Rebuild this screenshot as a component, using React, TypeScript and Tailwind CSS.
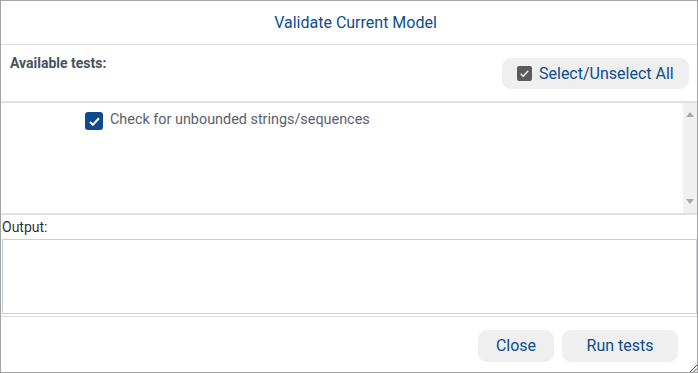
export default function App() {
  return (
    <div className="flex h-[373px] w-[698px] flex-col border border-[#a3a3a3] bg-white font-['Roboto',sans-serif]">
      {/* Header */}
      <div className="flex h-[44px] shrink-0 items-center justify-center border-b border-[#dcdcdc] pl-[13px]">
        <h1 className="text-[16px] text-[#0d4c92]">Validate Current Model</h1>
      </div>

      {/* Toolbar */}
      <div className="flex h-[58px] shrink-0 items-start justify-between border-b-2 border-[#e0e0e0] pr-[8px] pl-[9px]">
        <span className="mt-[8px] text-[14px] font-bold text-[#4a5260]">Available tests:</span>
        <button className="mt-[13px] flex h-[31px] w-[187px] items-center gap-[7px] rounded-[9px] bg-[#efefef] pl-[15px] text-[16px] text-[#0d4c92]">
          <span className="flex size-[15px] items-center justify-center rounded-[2px] bg-[#5b5b5b]">
            <svg viewBox="0 0 16 16" className="size-[11px]" fill="none" stroke="#f4f4f4" strokeWidth="2">
              <path d="M2.5 8.5l3.5 3.5 7.5-8" />
            </svg>
          </span>
          Select/Unselect All
        </button>
      </div>

      {/* Tests list */}
      <div className="flex h-[112px] shrink-0 border-b-2 border-[#e0e0e0]">
        <div className="flex flex-1 items-start pt-[8px] pl-[84px]">
          <label className="flex items-start gap-[7px] text-[14.4px] leading-[18px] text-[#5a616d]">
            <span className="mt-[1px] flex size-[18px] items-center justify-center rounded-[3px] bg-[#0e4a8f]">
              <svg viewBox="0 0 16 16" className="size-[13px]" fill="none" stroke="#fff" strokeWidth="2.4">
                <path d="M2.5 8.5l3.5 3.5 7.5-8" />
              </svg>
            </span>
            Check for unbounded strings/sequences
          </label>
        </div>
        <div className="flex w-[14px] flex-col items-center justify-between bg-[#f0f0f0] py-[9px]">
          <svg viewBox="0 0 8 5" className="h-[5px] w-[8px]">
            <path d="M4 0L8 5H0z" fill="#a8a8a8" />
          </svg>
          <svg viewBox="0 0 8 5" className="h-[5px] w-[8px]">
            <path d="M0 0h8L4 5z" fill="#a8a8a8" />
          </svg>
        </div>
      </div>

      {/* Output */}
      <div className="flex h-[24px] shrink-0 items-center pl-[1px] text-[14px] text-[#333]">Output:</div>
      <div className="ml-[1px] h-[75px] shrink-0 border border-[#c9d0d9]" />

      {/* Footer */}
      <div className="relative mt-[2px] flex flex-1 items-start justify-end gap-[8px] border-t border-[#dcdcdc] pt-[13px] pr-[19px]">
        <button className="h-[32px] w-[76px] rounded-[9px] bg-[#efefef] text-[16px] text-[#0d4c92]">Close</button>
        <button className="h-[32px] w-[116px] rounded-[9px] bg-[#efefef] text-[16px] text-[#0d4c92]">Run tests</button>
        <svg viewBox="0 0 8 8" className="absolute right-0 bottom-0 size-[8px]" stroke="#444" strokeWidth="1">
          <path d="M1 8L8 1M4.5 8L8 4.5" />
        </svg>
      </div>
    </div>
  );
}
